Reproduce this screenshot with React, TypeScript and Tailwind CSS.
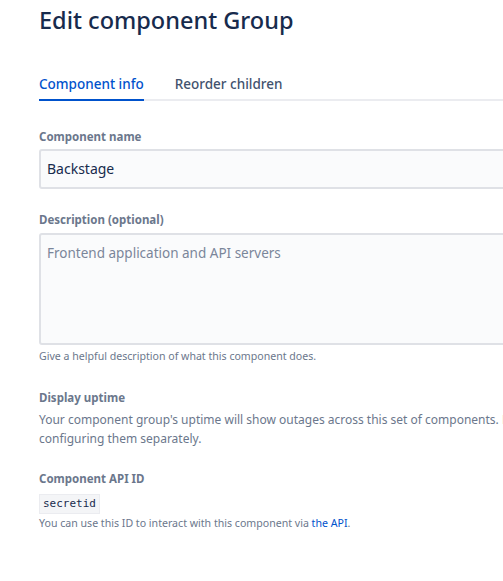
import React from "react";

export default function App() {
  return (
    <div className="w-[503px] h-[581px] overflow-hidden bg-white" style={{ fontFamily: '"Noto Sans", "Open Sans", sans-serif' }}>
      <div className="w-[760px] pl-[39px]">
        <h1 className="pt-[3px] text-[23.5px] leading-[34px] font-medium text-[#172B4D]">Edit component Group</h1>
        <div className="mt-[37px] flex border-b-2 border-[#EBECF0]">
          <div className="relative pb-[5px] text-[13.5px] leading-[20px] font-medium text-[#0052CC]">
            Component info
            <div className="absolute left-0 right-0 -bottom-[2px] h-[2px] bg-[#0052CC]" />
          </div>
          <div className="ml-[31px] pb-[5px] text-[13.5px] leading-[20px] font-medium text-[#42526E]">Reorder children</div>
        </div>

        <div className="mt-[28px] text-[11.5px] leading-[16px] font-bold text-[#6B778C]">Component name</div>
        <div className="mt-[4px] h-[40px] rounded-[3px] border-2 border-[#DFE1E6] bg-[#FAFBFC] flex items-center px-[6px] pb-[2px] text-[14px] text-[#172B4D]">
          Backstage
        </div>

        <div className="mt-[23px] text-[11.5px] leading-[16px] font-bold text-[#6B778C]">Description (optional)</div>
        <div className="mt-[5px] h-[112px] rounded-[3px] border-2 border-[#DFE1E6] bg-[#FAFBFC] px-[6px] pt-[8px] text-[13.5px] leading-[20px] text-[#7A869A]">
          Frontend application and API servers
        </div>
        <div className="mt-[3px] text-[10.6px] leading-[16px] text-[#6B778C]">Give a helpful description of what this component does.</div>

        <div className="mt-[26px] text-[11.5px] leading-[16px] font-bold text-[#6B778C]">Display uptime</div>
        <p className="mt-[4px] text-[12px] leading-[19px] text-[#6B778C] whitespace-nowrap">
          Your component group's uptime will show outages across this set of components. Each component keeps its own uptime without
          <br />
          configuring them separately.
        </p>

        <div className="mt-[23px] text-[11.5px] leading-[16px] font-bold text-[#6B778C]">Component API ID</div>
        <div className="mt-[7px] inline-block border border-[#EBECF0] bg-[#F4F5F7] px-[3px] text-[11px] leading-[18px] text-[#172B4D]" style={{ fontFamily: '"DejaVu Sans Mono", monospace' }}>
          secretid
        </div>
        <div className="mt-[1px] text-[10.6px] leading-[16px] text-[#6B778C]">
          You can use this ID to interact with this component via <span className="text-[#0052CC]">the API</span>.
        </div>
      </div>
    </div>
  );
}
